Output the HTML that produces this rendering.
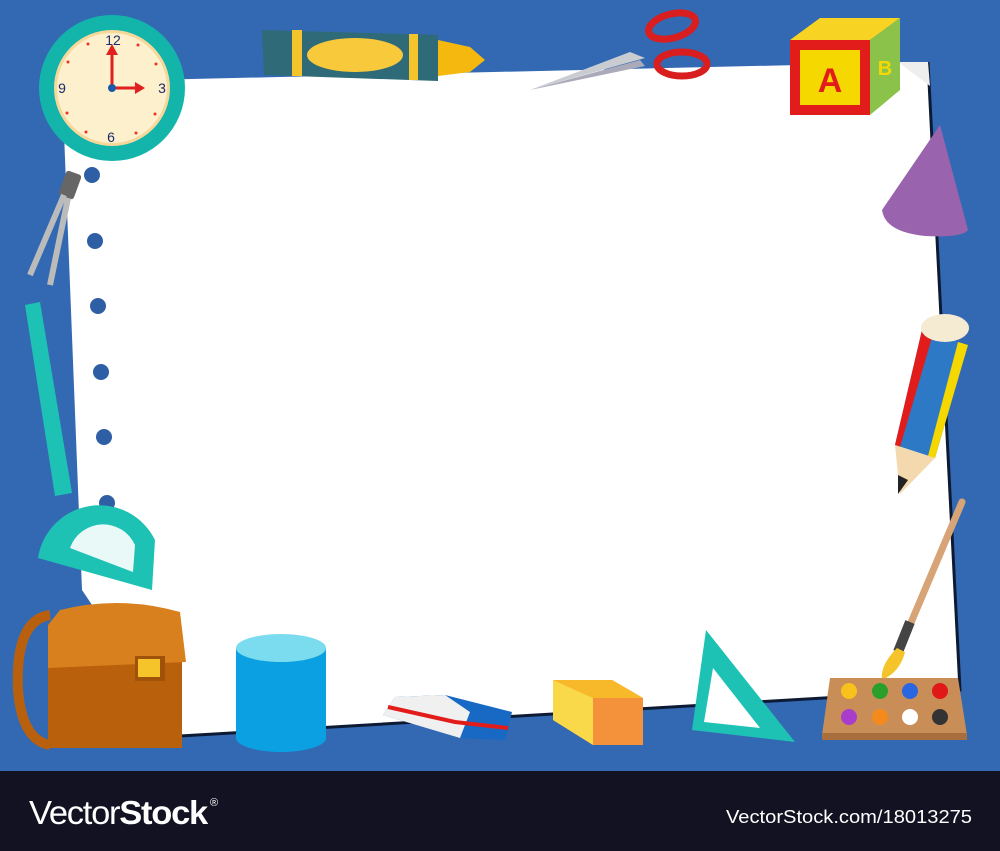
<!DOCTYPE html>
<html><head><meta charset="utf-8"><style>
html,body{margin:0;padding:0;width:1000px;height:851px;overflow:hidden;background:#3369b3}
svg{display:block}
.f{font-family:"Liberation Sans",sans-serif}
</style></head><body>
<svg width="1000" height="851" viewBox="0 0 1000 851" xmlns="http://www.w3.org/2000/svg">
<rect width="1000" height="771" fill="#3369b3"/>
<!-- paper -->
<polygon points="62,82 928,62 960,690 180,736 82,590" fill="#fff"/>
<polyline points="928,62 960,690 180,736" fill="none" stroke="#0d1a33" stroke-width="3"/>
<polygon points="898,62 928,62 930,86" fill="#eee"/>
<!-- holes -->
<g fill="#2e5fa5">
<circle cx="92" cy="175" r="8"/><circle cx="95" cy="241" r="8"/><circle cx="98" cy="306" r="8"/>
<circle cx="101" cy="372" r="8"/><circle cx="104" cy="437" r="8"/><circle cx="107" cy="503" r="8"/><circle cx="110" cy="566" r="8"/></g>
<!-- clock -->
<circle cx="112" cy="88" r="73" fill="#13b5ab"/>
<circle cx="112" cy="88" r="58" fill="#f6d89b"/>
<circle cx="112" cy="88" r="55" fill="#fdf0cc"/>
<g class="f" fill="#1b2b6b" font-size="14" text-anchor="middle"><text x="113" y="45">12</text><text x="162" y="93">3</text><text x="111" y="142">6</text><text x="62" y="93">9</text></g>
<g fill="#e32"><circle cx="88" cy="44" r="1.5"/><circle cx="138" cy="45" r="1.5"/><circle cx="156" cy="64" r="1.5"/><circle cx="155" cy="114" r="1.5"/><circle cx="136" cy="133" r="1.5"/><circle cx="86" cy="132" r="1.5"/><circle cx="67" cy="113" r="1.5"/><circle cx="68" cy="62" r="1.5"/></g>
<path d="M112,88 V52 M112,88 H138" stroke="#e02020" stroke-width="3"/>
<polygon points="106,55 112,44 118,55" fill="#e02020"/><polygon points="135,82 145,88 135,94" fill="#e02020"/>
<circle cx="112" cy="88" r="4" fill="#1a5aa8"/>
<!-- crayon -->
<polygon points="262,30 438,35 438,81 264,75" fill="#2f6a78"/>
<rect x="292" y="30" width="10" height="46" fill="#f5c32a"/><rect x="409" y="34" width="9" height="46" fill="#f5c32a"/>
<ellipse cx="355" cy="55" rx="48" ry="17" fill="#f8c93a"/>
<polygon points="438,40 470,47 485,60 470,72 438,76" fill="#f5b80f"/>
<!-- scissors -->
<polygon points="530,90 630,52 645,58" fill="#c9cdd2"/><polygon points="530,90 640,60 645,66" fill="#aab"/>
<ellipse cx="672" cy="26" rx="24" ry="12" fill="none" stroke="#d81e1e" stroke-width="7" transform="rotate(-15 672 26)"/>
<ellipse cx="682" cy="64" rx="25" ry="12" fill="none" stroke="#d81e1e" stroke-width="7"/>
<!-- abc block -->
<polygon points="790,40 870,40 900,18 820,18" fill="#f7d423"/>
<polygon points="870,40 900,18 900,90 870,115" fill="#8bc34a"/>
<rect x="790" y="40" width="80" height="75" fill="#e21b1b"/><rect x="800" y="50" width="60" height="55" fill="#f5d800"/>
<text x="830" y="92" class="f" font-size="34" font-weight="bold" fill="#e21b1b" text-anchor="middle">A</text>
<text x="885" y="75" class="f" font-size="20" font-weight="bold" fill="#f5d800" text-anchor="middle">B</text>
<!-- cone -->
<path d="M940,125 L882,210 Q885,232 925,236 Q962,238 968,230 Z" fill="#9a63ad"/>
<!-- compass -->
<rect x="62" y="172" width="16" height="26" rx="3" fill="#666" transform="rotate(20 70 185)"/>
<path d="M64,195 L30,275 M68,198 L50,285" stroke="#bbb" stroke-width="6"/>
<!-- ruler -->
<polygon points="25,305 40,302 72,493 55,496" fill="#1ec2b4"/>
<!-- protractor -->
<path d="M38,558 A62,62 0 0 1 155,540 L152,590 Z" fill="#1ec2b4"/><path d="M70,548 A35,35 0 0 1 135,545 L133,572 Z" fill="#fff" opacity=".9"/>
<!-- pencil -->
<polygon points="922,330 968,345 935,458 895,445" fill="#2e79c6"/>
<polygon points="922,330 933,334 900,447 895,445" fill="#e21b1b"/><polygon points="958,342 968,345 935,458 928,456" fill="#f5d800"/>
<ellipse cx="945" cy="328" rx="24" ry="14" fill="#f4ebd2"/>
<polygon points="895,445 935,458 900,494" fill="#f3d9ad"/><polygon points="898,475 908,480 898,494" fill="#222"/>
<!-- brush -->
<path d="M962,502 L910,625" stroke="#d7a478" stroke-width="7" stroke-linecap="round"/>
<path d="M910,622 L898,652" stroke="#444" stroke-width="10"/>
<path d="M897,648 Q880,665 882,680 Q900,672 905,652Z" fill="#f5c42a"/>
<!-- palette -->
<path d="M830,678 L958,678 L967,735 L822,735 Z" fill="#c98e57"/><rect x="822" y="733" width="145" height="7" fill="#a86e3e"/>
<g><circle cx="849" cy="691" r="8" fill="#f7c21c"/><circle cx="880" cy="691" r="8" fill="#2aa02a"/><circle cx="910" cy="691" r="8" fill="#2a66e0"/><circle cx="940" cy="691" r="8" fill="#e01818"/>
<circle cx="849" cy="717" r="8" fill="#a83dcc"/><circle cx="880" cy="717" r="8" fill="#f58a1c"/><circle cx="910" cy="717" r="8" fill="#fff"/><circle cx="940" cy="717" r="8" fill="#333"/></g>
<!-- set square -->
<polygon points="706,630 795,742 692,730" fill="#1ec2b4"/><polygon points="713,668 760,728 704,722" fill="#fff"/>
<!-- cube -->
<polygon points="553,680 612,680 643,698 643,745 593,745 553,720" fill="#f3923a"/>
<polygon points="553,680 612,680 643,698 593,698" fill="#f7b92a"/><polygon points="553,680 593,698 593,745 553,720" fill="#f9d94a"/>
<!-- eraser -->
<polygon points="395,697 445,695 512,712 505,740 460,738 383,715" fill="#1769c4"/>
<polygon points="395,697 445,695 470,712 460,738 383,715" fill="#f0f0f0"/>
<path d="M388,707 L455,722 L508,728" stroke="#e21b1b" stroke-width="4" fill="none"/>
<!-- cylinder -->
<rect x="236" y="648" width="90" height="90" fill="#0aa0e2"/>
<ellipse cx="281" cy="738" rx="45" ry="14" fill="#0aa0e2"/><ellipse cx="281" cy="648" rx="45" ry="14" fill="#7adcee"/>
<!-- bag -->
<path d="M50,615 Q15,620 18,690 Q22,740 50,745" fill="none" stroke="#b9600e" stroke-width="10"/>
<rect x="48" y="640" width="134" height="108" fill="#b8600c"/>
<path d="M60,610 Q120,595 180,612 L186,662 L48,668 L48,625 Z" fill="#d87f1e"/>
<rect x="135" y="656" width="30" height="25" fill="#a05208"/><rect x="138" y="659" width="22" height="18" fill="#f5c42a"/>
<!-- footer -->
<rect y="771" width="1000" height="80" fill="#121222"/>
<text x="29" y="824" class="f" font-size="33" fill="#fff" letter-spacing="-1.2" textLength="178" lengthAdjust="spacingAndGlyphs">Vector<tspan font-weight="bold">Stock</tspan></text>
<text x="210" y="806" class="f" font-size="11" fill="#fff">®</text>
<text x="972" y="823" class="f" font-size="18" fill="#fff" text-anchor="end" textLength="246" lengthAdjust="spacingAndGlyphs">VectorStock.com/18013275</text>
</svg>
</body></html>
